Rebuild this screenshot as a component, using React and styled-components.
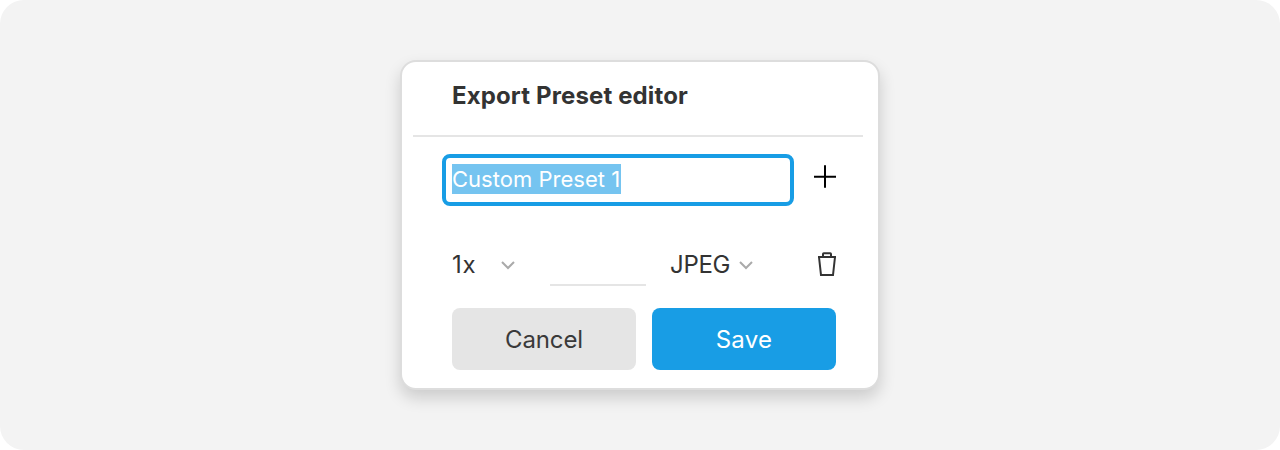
import React from "react";
import styled, { createGlobalStyle } from "styled-components";

const GlobalStyle = createGlobalStyle`
  * { box-sizing: border-box; }
  body { margin: 0; background: #fff; font-family: Inter, "Liberation Sans", sans-serif; color: #333; }
`;

const Stage = styled.main`
  height: 450px;
  padding-top: 60px;
  display: flex;
  justify-content: center;
  align-items: flex-start;
  background: #f3f3f3;
  border-radius: 24px;
`;

const Dialog = styled.section`
  width: 480px;
  height: 330px;
  border: 2px solid #dddddd;
  background: #fff;
  border-radius: 16px;
  box-shadow: 0 8px 16px rgba(0, 0, 0, 0.16);
`;

const Header = styled.header`
  height: 74.5px;
  margin: 0 15px 0 11px;
  padding: 18px 0 0 39px;
  border-bottom: 2px solid #e5e5e5;
`;

const Title = styled.h1`
  margin: 0;
  font-size: 24px;
  line-height: 32px;
  font-weight: 700;
  letter-spacing: 0.13px;
`;

const NameRow = styled.div`
  display: flex;
  margin: 17px 40px 0;
  gap: 19px;
`;

const NameField = styled.div`
  width: 352px;
  height: 52.5px;
  padding: 6.5px 6px;
  border: 4px solid #189de5;
  border-radius: 8px;
`;

const Selection = styled.span`
  display: block;
  width: 169px;
  height: 30px;
  background: #75c4f0;
  color: #fff;
  font-size: 22px;
  font-weight: 400;
  line-height: 30px;
  letter-spacing: 0.02px;
  white-space: nowrap;
`;

const IconButton = styled.button`
  display: block;
  flex-shrink: 0;
  width: 24px;
  height: 28px;
  padding: 0;
  border: 0;
  background: none;
  color: ${(p) => p.$color};
  margin: ${(p) => p.$margin};
`;

const Icon = styled.svg`
  display: block;
  fill: none;
  stroke: currentColor;
  stroke-width: 2;
`;

const OptionsRow = styled.div`
  display: flex;
  height: 48px;
  margin: 32px 38px 0 50px;
`;

const Select = styled.div`
  width: ${(p) => p.$width}px;
  margin-right: ${(p) => p.$after}px;
  padding-top: 11.5px;
  display: flex;
  justify-content: space-between;
  font-size: 24px;
  font-weight: 400;
  line-height: 30px;
  letter-spacing: ${(p) => p.$spacing || 0}px;
`;

const ChevronIcon = styled(Icon)`
  margin-top: 11.5px;
  color: #aaa;
`;

const SuffixField = styled.div`
  width: 96px;
  margin-right: 24px;
  border-bottom: 2px solid #e5e5e5;
`;

const Actions = styled.footer`
  display: flex;
  gap: 16px;
  margin: 22px 0 0 50px;
`;

const Button = styled.button`
  width: 184px;
  height: 62px;
  padding: 2px 0 0;
  border: 0;
  border-radius: 8px;
  font: 400 24px/30px Inter, "Liberation Sans", sans-serif;
  letter-spacing: ${(p) => p.$spacing}px;
  background: ${(p) => (p.$primary ? "#189de5" : "#e5e5e5")};
  color: ${(p) => (p.$primary ? "#fff" : "#3a3a3a")};
`;

const Chevron = () => (
  <ChevronIcon width="14" height="9" viewBox="0 0 14 9">
    <path d="M1 1l6 6 6-6" />
  </ChevronIcon>
);

export default function App() {
  return (
    <>
      <GlobalStyle />
      <Stage>
        <Dialog>
          <Header>
            <Title>Export Preset editor</Title>
          </Header>
          <NameRow>
            <NameField>
              <Selection>Custom Preset 1</Selection>
            </NameField>
            <IconButton $color="#000" $margin="9.5px 0 0" aria-label="Add">
              <Icon width="24" height="28" viewBox="0 0 24 28">
                <path d="M12 2.3v22.4M1 13.8h22" />
              </Icon>
            </IconButton>
          </NameRow>
          <OptionsRow>
            <Select $width={63} $after={35} $spacing={0.7}>
              1x
              <Chevron />
            </Select>
            <SuffixField />
            <Select $width={83} $after={62} $spacing={-0.3}>
              JPEG
              <Chevron />
            </Select>
            <IconButton $color="#333" $margin="12px 0 0" aria-label="Delete">
              <Icon width="24" height="28" viewBox="0 0 24 28">
                <path d="M3 7h18M4 7l2 18h12l2-18M8 7V4.1q0-.8.8-.8h6.4q.8 0 .8.8V7" />
              </Icon>
            </IconButton>
          </OptionsRow>
          <Actions>
            <Button $spacing={-0.12}>Cancel</Button>
            <Button $primary $spacing={0.3}>Save</Button>
          </Actions>
        </Dialog>
      </Stage>
    </>
  );
}
